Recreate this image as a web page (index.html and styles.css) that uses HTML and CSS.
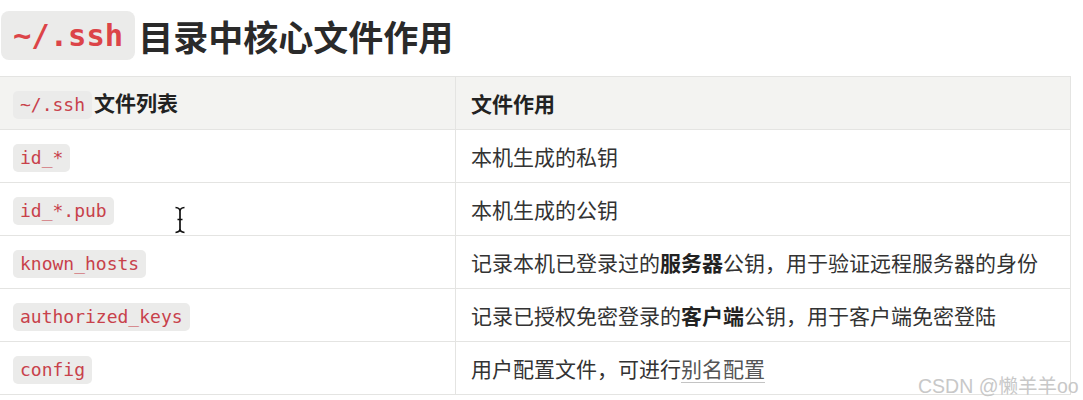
FILE: index.html
```html
<!DOCTYPE html>
<html lang="zh">
<head>
<meta charset="utf-8">
<link rel="stylesheet" href="styles.css">
</head>
<body>
<div class="page">
  <h1 class="title"><code class="title-code">~/.ssh</code><span>目录中核心文件作用</span></h1>
  <table class="files">
    <thead>
      <tr>
        <th class="c1"><code class="tag">~/.ssh</code>文件列表</th>
        <th class="c2">文件作用</th>
      </tr>
    </thead>
    <tbody>
      <tr><td class="c1"><code class="tag">id_*</code></td><td class="c2">本机生成的私钥</td></tr>
      <tr><td class="c1"><code class="tag">id_*.pub</code></td><td class="c2">本机生成的公钥</td></tr>
      <tr><td class="c1"><code class="tag">known_hosts</code></td><td class="c2">记录本机已登录过的<b>服务器</b>公钥，用于验证远程服务器的身份</td></tr>
      <tr><td class="c1"><code class="tag">authorized_keys</code></td><td class="c2">记录已授权免密登录的<b>客户端</b>公钥，用于客户端免密登陆</td></tr>
      <tr><td class="c1"><code class="tag">config</code></td><td class="c2">用户配置文件，可进行<span class="link">别名配置</span></td></tr>
    </tbody>
  </table>
  <svg class="cursor" width="14" height="28" viewBox="0 0 14 28">
    <path d="M2.5 1.5 Q7 2 7 5 Q7 2 11.5 1.5 M7 5 V23 M4.5 13.5 H9.5 M2.5 26.5 Q7 26 7 23 Q7 26 11.5 26.5" fill="none" stroke="#111" stroke-width="1.7"/>
  </svg>
  <div class="watermark">CSDN @懒羊羊oo</div>
</div>
</body>
</html>
```

FILE: styles.css
```css
html, body {
  margin: 0;
  padding: 0;
  background: #ffffff;
}
body {
  font-family: "Noto Sans CJK SC", "Noto Sans", sans-serif;
  color: #333333;
  overflow: hidden;
}
.page {
  position: relative;
  width: 1083px;
  height: 400px;
  overflow: hidden;
}
.title {
  display: flex;
  align-items: center;
  gap: 3px;
  margin: 11px 0 0 1px;
  height: 49px;
  font-size: 35px;
  font-weight: 700;
  color: #2a2a2a;
  line-height: 49px;
}
.title-code {
  display: inline-block;
  height: 49px;
  line-height: 49px;
  padding: 0 12px;
  border-radius: 8px;
  background: #ebebea;
  color: #dc4448;
  font-family: "DejaVu Sans Mono", monospace;
  font-size: 30.5px;
  font-weight: 700;
}
.files {
  margin-top: 16px;
  width: 1071px;
  border-collapse: collapse;
  table-layout: fixed;
  font-size: 21px;
}
.files th, .files td {
  height: 52px;
  padding: 0;
  border: 1px solid #e4e4e2;
  vertical-align: middle;
  text-align: left;
}
.files tr > :first-child {
  border-left: none;
}
.files .c1 {
  width: 442px;
  padding-left: 13px;
}
.files .c2 {
  padding-left: 15px;
}
.files thead th {
  background: #f3f3f1;
  font-weight: 700;
  color: #222222;
}
.tag {
  display: inline-block;
  height: 28px;
  line-height: 28px;
  padding: 0 7px;
  margin-right: 2px;
  border-radius: 5px;
  background: #ebebea;
  color: #c8414b;
  font-family: "DejaVu Sans Mono", monospace;
  font-size: 18px;
  font-weight: 400;
  vertical-align: middle;
}
.files b {
  font-weight: 700;
  color: #222222;
}
.link {
  color: #555555;
  text-decoration: underline;
  text-decoration-color: #c4c4c4;
  text-underline-offset: 5px;
  text-decoration-thickness: 1px;
}
.cursor {
  position: absolute;
  left: 173px;
  top: 206px;
}
.watermark {
  position: absolute;
  left: 918px;
  top: 370px;
  font-family: "Liberation Sans", "Noto Sans CJK SC", sans-serif;
  font-size: 19.5px;
  color: #c8c8c8;
  white-space: nowrap;
}
```
